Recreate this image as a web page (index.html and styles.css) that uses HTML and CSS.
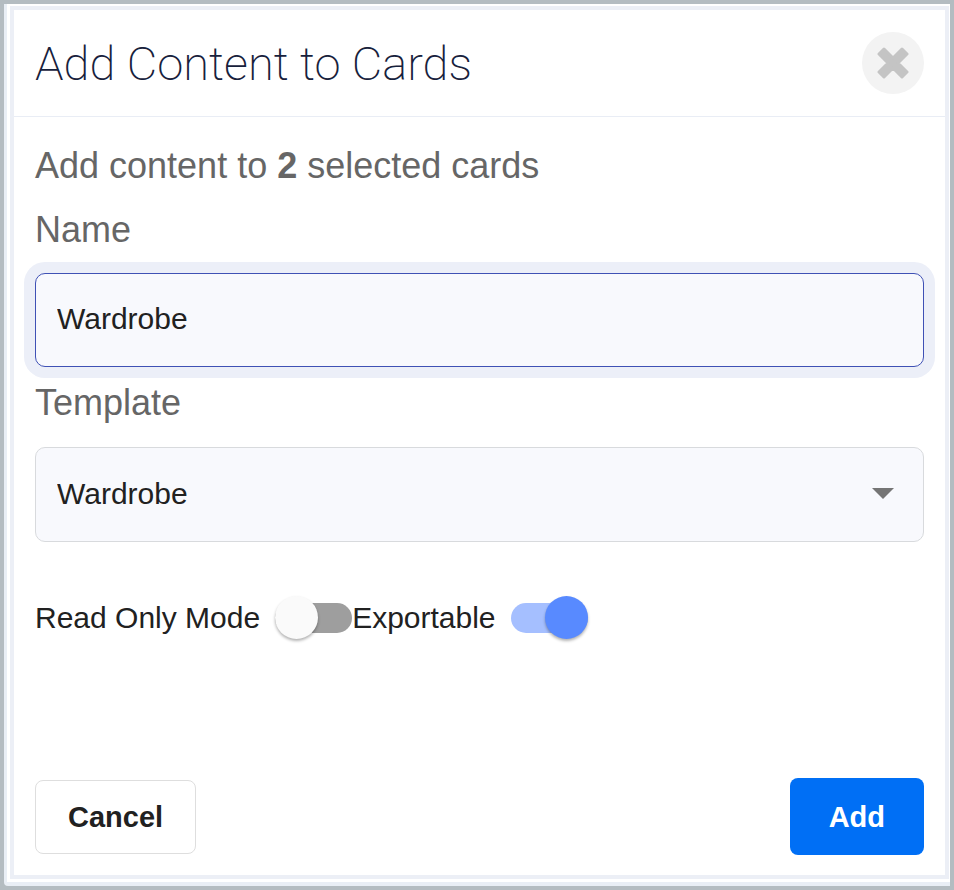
FILE: index.html
```
<!DOCTYPE html>
<html lang="en">
<head>
  <meta charset="UTF-8" />
  <meta name="viewport" content="width=device-width, initial-scale=1" />
  <title>Add Content to Cards</title>
  <link rel="stylesheet" href="styles.css">
</head>
<body>
  <div class="backdrop">
    <form class="modal">
      <header class="modal-header">
        <h1>Add Content to Cards</h1>
        <button type="button" class="close" aria-label="Close">
          <svg viewBox="0 0 32 32" width="32" height="32">
            <path d="M7 2 L16 11 L25 2 L30 7 L21 16 L30 25 L25 30 L16 21 L7 30 L2 25 L11 16 L2 7 Z" />
          </svg>
        </button>
      </header>

      <div class="modal-body">
        <p class="intro">Add content to <strong>2</strong> selected cards</p>

        <div class="field">
          <label for="name">Name</label>
          <input type="text" id="name" class="control active" value="Wardrobe" />
        </div>

        <div class="field">
          <label for="template">Template</label>
          <div class="select-wrap">
            <select id="template" class="control">
              <option selected>Wardrobe</option>
            </select>
            <svg class="arrow" viewBox="0 0 22 11" width="22" height="11">
              <path d="M0 0 H22 L11 11 Z" />
            </svg>
          </div>
        </div>

        <div class="switches">
          <label for="readOnly">Read Only Mode</label>
          <input type="checkbox" id="readOnly" class="switch" />
          <label for="exportable">Exportable</label>
          <input type="checkbox" id="exportable" class="switch" checked />
        </div>
      </div>

      <footer class="modal-footer">
        <button type="button" class="btn btn-cancel">Cancel</button>
        <button type="submit" class="btn btn-add">Add</button>
      </footer>
    </form>
  </div>
</body>
</html>
```
FILE: styles.css
```
* {
  box-sizing: border-box;
}
body {
  margin: 0;
  min-height: 100vh;
  display: flex;
  border: 4px solid #b4bcc1;
  background: #b4bcc1;
  font-family: "Liberation Sans", Arial, sans-serif;
  font-size: 30px;
  color: #212121;
}
.backdrop {
  flex: 1;
  display: flex;
  padding: 2px 1px 3px 3px;
  border-left: 3px solid #e9eef5;
  border-bottom: 4px solid #e9eef5;
  border-bottom-left-radius: 4px;
  background: #fff;
}
.modal {
  flex: 1;
  display: flex;
  flex-direction: column;
  border: 4px solid #eceff6;
  background: #fff;
}

/* header */
.modal-header {
  display: flex;
  align-items: center;
  justify-content: space-between;
  padding: 22px 21px;
  border-bottom: 1px solid #e9edf5;
}
h1 {
  margin: 0;
  padding-top: 2px;
  font-family: Roboto, "Liberation Sans", sans-serif;
  font-size: 47px;
  font-weight: 200;
  line-height: 60px;
  color: #17213c;
}
.close {
  display: flex;
  align-items: center;
  justify-content: center;
  width: 62px;
  height: 62px;
  padding: 0;
  border: none;
  border-radius: 50%;
  background: #f3f3f3;
  cursor: pointer;
}
.close path {
  fill: #c4c4c4;
  stroke: #c4c4c4;
  stroke-width: 3;
  stroke-linejoin: round;
}

/* body */
.modal-body {
  flex: 1;
  padding: 17px 21px 0;
}
.intro,
.field label {
  display: block;
  margin: 0;
  font-size: 36px;
  line-height: 64px;
  color: #666;
}
.field {
  margin-bottom: 4px;
}
.control {
  display: block;
  width: 100%;
  height: 94px;
  margin-top: 11px;
  padding: 0 21px 2px;
  border: 1px solid #d8dadd;
  border-radius: 10px;
  background: #f8f9fd;
  font: inherit;
  color: inherit;
  appearance: none;
  outline: none;
}
.control.active,
.control:focus {
  border-color: #3f51b5;
  box-shadow: 0 0 0 11px #eceff8;
}
select.control {
  height: 95px;
  margin-top: 12px;
}
.select-wrap {
  position: relative;
}
.arrow {
  position: absolute;
  top: 41px;
  right: 30px;
  fill: #757575;
  pointer-events: none;
}
.switches {
  display: flex;
  flex-wrap: wrap;
  align-items: center;
  margin-top: 54px;
  line-height: 44px;
}
.switch {
  position: relative;
  width: 77px;
  height: 30px;
  margin: 0 0 0 15px;
  border-radius: 15px;
  background: #9e9e9e;
  appearance: none;
  cursor: pointer;
}
.switch::before {
  content: "";
  position: absolute;
  top: -7px;
  left: 0;
  width: 43px;
  height: 43px;
  border-radius: 50%;
  background: #fafafa;
  box-shadow: 0 2px 3px rgba(0, 0, 0, 0.3);
}
.switch:checked {
  background: #a5bfff;
}
.switch:checked::before {
  left: auto;
  right: 0;
  background: #588aff;
}

/* footer */
.modal-footer {
  display: flex;
  align-items: center;
  justify-content: space-between;
  padding: 20px 21px;
}
.btn {
  height: 74px;
  padding: 2px 32px 0;
  border: 1px solid #dedede;
  border-radius: 8px;
  background: #fff;
  font: bold 29px "Liberation Sans", Arial, sans-serif;
  color: #212121;
  cursor: pointer;
}
.btn-add {
  height: 77px;
  padding: 2px 39px 0;
  border: none;
  background: #006ff5;
  color: #fff;
}
```
